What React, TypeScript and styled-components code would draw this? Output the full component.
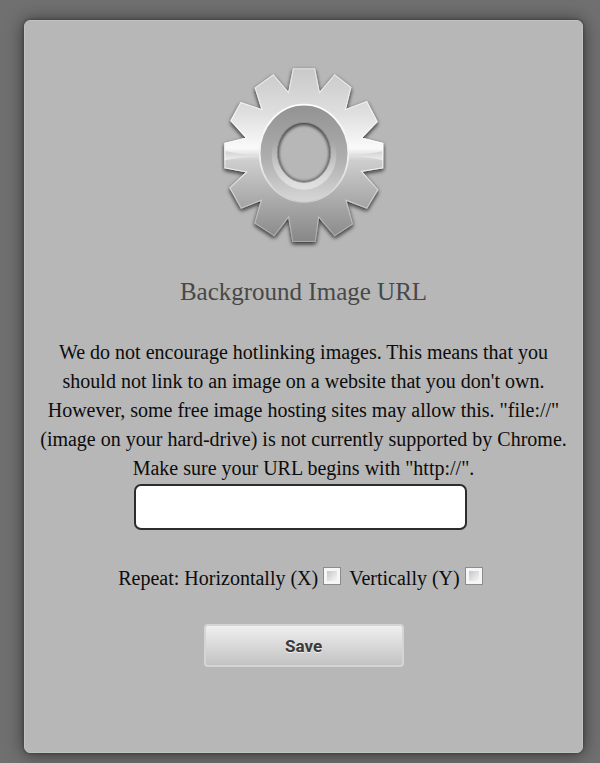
import React from "react";
import styled, { createGlobalStyle } from "styled-components";

const GlobalStyle = createGlobalStyle`
  *, *::before, *::after { box-sizing: border-box; }
  body {
    margin: 0;
    background: #707070;
    font-family: "Liberation Serif", "Times New Roman", serif;
    color: #0c0c0c;
  }
`;

const Page = styled.main`
  display: flex;
  min-height: 100vh;
  padding: 20px 17px 10px 24px;
`;

const Card = styled.form`
  flex: 1;
  display: flex;
  flex-direction: column;
  align-items: center;
  padding: 44px 12px 24px;
  border: 1px solid #c2c2c2;
  border-radius: 6px;
  background: #b7b7b7;
  box-shadow: 0 0 3px #333, 0 1px 18px rgba(0, 0, 0, 0.55);
`;

const GearIcon = styled.svg`
  display: block;
  width: 166px;
  height: 184px;
`;

const Title = styled.h1`
  margin: 26px 0 0;
  font-size: 25px;
  line-height: 34px;
  font-weight: 400;
  color: #484848;
`;

const Description = styled.p`
  margin: 29px 0 0;
  font-size: 20px;
  line-height: 29px;
  text-align: center;
`;

const Fields = styled.div`
  display: flex;
  flex-direction: column;
  align-items: center;
  max-width: 100%;
  padding-right: 6px;
`;

const UrlInput = styled.input`
  width: 333px;
  max-width: 100%;
  height: 46px;
  margin-top: 1px;
  padding: 0 12px;
  border: 2px solid #2c2c2c;
  border-radius: 7px;
  background: #fff;
  font: inherit;
  font-size: 20px;
`;

const RepeatRow = styled.fieldset`
  display: flex;
  align-items: center;
  gap: 8px;
  margin: 34px 0 0;
  padding: 0;
  border: 0;
  font-size: 20px;
  line-height: 28px;
`;

const Option = styled.label`
  display: flex;
  align-items: center;
  gap: 5px;
`;

const Tick = styled.input`
  appearance: none;
  width: 18px;
  height: 18px;
  margin: 0 0 4px;
  border: 1px solid #8c8c8c;
  background: linear-gradient(135deg, #c3c7cc, #f6f6f6) content-box, #f6f6f6;
  padding: 3px;

  &:checked {
    background: linear-gradient(135deg, #39506b, #7288a0) content-box, #f6f6f6;
  }
`;

const SaveButton = styled.button`
  width: 200px;
  height: 43px;
  margin-top: 32px;
  border: 2px solid #d5d5d5;
  border-radius: 4px;
  background: linear-gradient(#efefef, #c3c3c3);
  font: 700 17px/20px Roboto, sans-serif;
  color: #3a3a3a;
  text-shadow: 0 1px 0 #eee;
`;

const GEAR_OUTLINE =
  "M263 40H329L343 110L388 58L438 97L422 162L485 138L517 200L471 248L534 264V340L471 350L519 404L485 461L424 438L443 508L388 544L341 489L331 561H261L249 489L207 544L147 505L166 438L107 461L72 398L121 352L57 340V264L121 248L75 197L106 141L168 162L148 98L204 58L249 110Z";

const HOLE = "M216 292a80 90 0 1 0 160 0a80 90 0 1 0 -160 0Z";

function Gear() {
  return (
    <GearIcon viewBox="47 30 498 552" aria-hidden="true">
      <defs>
        <linearGradient id="body" gradientUnits="userSpaceOnUse" x1="0" y1="40" x2="0" y2="561">
          <stop offset="0" stopColor="#c9c9c9" />
          <stop offset="0.25" stopColor="#dedede" />
          <stop offset="0.46" stopColor="#fafafa" />
          <stop offset="0.53" stopColor="#cecece" />
          <stop offset="0.75" stopColor="#acacac" />
          <stop offset="1" stopColor="#878787" />
        </linearGradient>
        <linearGradient id="edge" x1="0" y1="0" x2="0" y2="1">
          <stop offset="0" stopColor="#e6e6e6" />
          <stop offset="0.5" stopColor="#ffffff" />
          <stop offset="0.8" stopColor="#c6c6c6" />
          <stop offset="1" stopColor="#a8a8a8" />
        </linearGradient>
        <linearGradient id="facet" x1="0" y1="0" x2="0" y2="1">
          <stop offset="0" stopColor="#d2d2d2" />
          <stop offset="1" stopColor="#ededed" />
        </linearGradient>
        <linearGradient id="bowl" x1="0" y1="0" x2="0" y2="1">
          <stop offset="0" stopColor="#929292" />
          <stop offset="0.55" stopColor="#aeaeae" />
          <stop offset="1" stopColor="#d7d7d7" />
        </linearGradient>
        <linearGradient id="lip" x1="0" y1="0" x2="0" y2="1">
          <stop offset="0.3" stopColor="#dddddd" stopOpacity="0" />
          <stop offset="1" stopColor="#e2e2e2" />
        </linearGradient>
        <linearGradient id="rim" x1="0" y1="0" x2="0" y2="1">
          <stop offset="0" stopColor="#ffffff" />
          <stop offset="0.6" stopColor="#eeeeee" />
          <stop offset="1" stopColor="#c8cdd0" />
        </linearGradient>
        <filter id="shadow" x="-10%" y="-10%" width="120%" height="120%">
          <feDropShadow dx="0" dy="6" stdDeviation="7" floodColor="#111" floodOpacity="0.85" />
        </filter>
        <filter id="soft" x="-20%" y="-20%" width="140%" height="140%">
          <feGaussianBlur stdDeviation="5" />
        </filter>
        <clipPath id="teeth">
          <path d={GEAR_OUTLINE} />
        </clipPath>
      </defs>
      <path d={GEAR_OUTLINE} fill="url(#body)" filter="url(#shadow)" />
      <g clipPath="url(#teeth)">
        <path d="M57 288Q110 300 165 298V304Q110 304 57 316Z" fill="url(#facet)" />
        <path d="M534 288Q482 300 427 298V304Q482 304 534 316Z" fill="url(#facet)" />
        <path d={GEAR_OUTLINE} fill="none" stroke="url(#edge)" strokeWidth="6" />
      </g>
      <ellipse cx="296" cy="295" rx="133" ry="146" fill="url(#bowl)" stroke="url(#rim)" strokeWidth="5" />
      <ellipse cx="296" cy="301" rx="97" ry="103" fill="url(#lip)" />
      <path d={HOLE} fill="#4d4d4d" />
      <ellipse cx="296" cy="295" rx="75" ry="84" fill="#b7b7b7" filter="url(#soft)" />
      <path d={HOLE} fill="none" stroke="#909090" strokeWidth="3" />
    </GearIcon>
  );
}

export default function App() {
  return (
    <>
      <GlobalStyle />
      <Page>
        <Card onSubmit={(event) => event.preventDefault()}>
          <Gear />
          <Title>Background Image URL</Title>
          <Description id="url-help">
            We do not encourage hotlinking images. This means that you should not link to an image
            on a website that you don't own. However, some free image hosting sites may allow this.
            "file://" (image on your hard-drive) is not currently supported by Chrome. Make sure
            your URL begins with "http://".
          </Description>
          <Fields>
            <UrlInput type="text" aria-label="Background Image URL" aria-describedby="url-help" />
            <RepeatRow>
              <Option>
                <span>Repeat: Horizontally (X)</span>
                <Tick type="checkbox" name="repeat-x" />
              </Option>
              <Option>
                <span>Vertically (Y)</span>
                <Tick type="checkbox" name="repeat-y" />
              </Option>
            </RepeatRow>
          </Fields>
          <SaveButton type="submit">Save</SaveButton>
        </Card>
      </Page>
    </>
  );
}
